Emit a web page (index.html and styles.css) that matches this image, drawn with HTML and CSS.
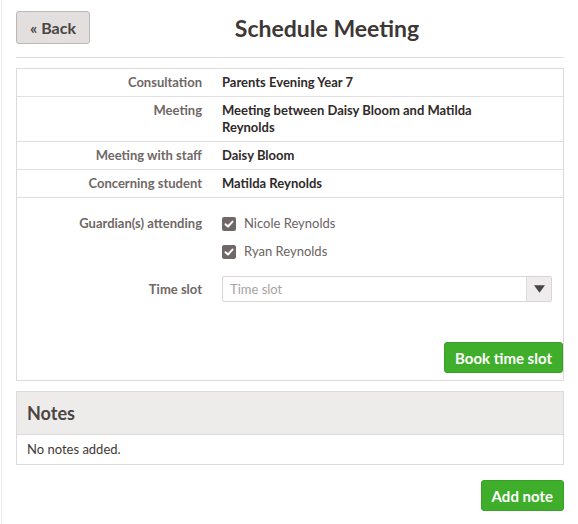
FILE: index.html
```html
<!DOCTYPE html>
<html>
<head>
<meta charset="utf-8">
<link rel="stylesheet" href="styles.css">
</head>
<body>
<div class="page">
  <div class="header">
    <button class="btn-back">« Back</button>
    <h1 class="title">Schedule Meeting</h1>
  </div>
  <div class="box">
    <div class="row"><div class="label">Consultation</div><div class="value">Parents Evening Year 7</div></div>
    <div class="row"><div class="label">Meeting</div><div class="value">Meeting between Daisy Bloom and Matilda Reynolds</div></div>
    <div class="row"><div class="label">Meeting with staff</div><div class="value">Daisy Bloom</div></div>
    <div class="row"><div class="label">Concerning student</div><div class="value">Matilda Reynolds</div></div>
    <div class="form">
      <div class="frow">
        <div class="label">Guardian(s) attending</div>
        <div class="checks">
          <label class="check"><span class="cb"><svg viewBox="0 0 14 14" width="14" height="14"><path d="M3.5 7.2 L6 9.5 L10.5 4.6" fill="none" stroke="#fff" stroke-width="2" stroke-linecap="round" stroke-linejoin="round"/></svg></span>Nicole Reynolds</label>
          <label class="check"><span class="cb"><svg viewBox="0 0 14 14" width="14" height="14"><path d="M3.5 7.2 L6 9.5 L10.5 4.6" fill="none" stroke="#fff" stroke-width="2" stroke-linecap="round" stroke-linejoin="round"/></svg></span>Ryan Reynolds</label>
        </div>
      </div>
      <div class="frow frow-select">
        <div class="label">Time slot</div>
        <div class="select"><span class="placeholder">Time slot</span><span class="arrow"><svg viewBox="0 0 12 8" width="11" height="8"><path d="M0 0 H12 L6 8 Z" fill="#4a4443"/></svg></span></div>
      </div>
      <div class="actions"><button class="btn-green">Book time slot</button></div>
    </div>
  </div>
  <div class="notes">
    <div class="notes-head">Notes</div>
    <div class="notes-body">No notes added.</div>
  </div>
  <div class="actions actions-bottom"><button class="btn-green">Add note</button></div>
</div>
</body>
</html>
```
FILE: styles.css
```css
html, body { margin: 0; padding: 0; background: #fff; }
body { font-family: "Lato", "Open Sans", sans-serif; color: #3a3432; }
.page {
  margin-left: 1px;
  border-left: 1px solid #ececec;
  min-height: 524px;
  box-sizing: border-box;
  padding: 11px 14px 0 14px;
}
.header {
  display: flex;
  align-items: center;
  padding-bottom: 13px;
  border-bottom: 1px solid #dedcdc;
}
.btn-back {
  width: 74px;
  height: 33px;
  background: #e3dfdf;
  border: 1px solid #bdb8b7;
  border-radius: 3px;
  font-family: inherit;
  font-weight: 700;
  font-size: 16px;
  color: #4a4443;
  padding: 0;
}
.title {
  flex: 1;
  text-align: center;
  margin: 0;
  font-size: 23px;
  font-weight: 700;
  color: #3d3735;
}
.box {
  margin-top: 10px;
  border: 1px solid #dcdada;
}
.row {
  display: grid;
  grid-template-columns: 185px 1fr;
  column-gap: 20px;
  padding: 5px 0;
  border-bottom: 1px solid #e0dede;
  font-size: 13px;
  line-height: 17px;
}
.label {
  text-align: right;
  font-weight: 700;
  color: #6f6866;
  font-size: 13px;
}
.value {
  font-weight: 700;
  color: #2f2a29;
  padding-right: 70px;
}
.form { padding: 16px 0 7px 0; }
.frow {
  display: grid;
  grid-template-columns: 185px 1fr;
  column-gap: 20px;
  font-size: 13px;
  line-height: 19px;
  padding-right: 11px;
}
.checks { display: flex; flex-direction: column; gap: 9px; }
.check {
  display: flex;
  align-items: center;
  gap: 8px;
  color: #6a6362;
  font-size: 13px;
}
.cb {
  width: 14px; height: 14px;
  background: #706866;
  border-radius: 2px;
  display: inline-flex;
}
.frow-select { margin-top: 15px; align-items: center; }
.select {
  display: flex;
  height: 26px;
  border: 1px solid #d8d5d4;
  border-radius: 2px;
  box-sizing: border-box;
}
.placeholder {
  flex: 1;
  padding-left: 7px;
  line-height: 24px;
  color: #a8a2a1;
  font-size: 13px;
}
.arrow {
  width: 24px;
  background: #eeecec;
  border-left: 1px solid #dedbdb;
  display: flex;
  align-items: center;
  justify-content: center;
}
.actions { display: flex; justify-content: flex-end; }
.form .actions { margin-top: 40px; }
.btn-green {
  background: #3fae2a;
  color: #fff;
  border: 1px solid #38a026;
  border-radius: 3px;
  font-family: inherit;
  font-weight: 700;
  font-size: 15px;
  height: 31px;
  padding: 0 10px;
}
.notes {
  margin-top: 10px;
  border: 1px solid #dcdada;
}
.notes-head {
  background: #eeeceb;
  border-bottom: 1px solid #dcdada;
  font-size: 18px;
  font-weight: 700;
  color: #4a4443;
  padding: 0 10px;
  height: 42px;
  line-height: 42px;
}
.notes-body {
  padding: 0 10px;
  height: 29px;
  line-height: 29px;
  font-size: 13px;
  color: #3f3937;
}
.actions-bottom { margin-top: 15px; }
```
